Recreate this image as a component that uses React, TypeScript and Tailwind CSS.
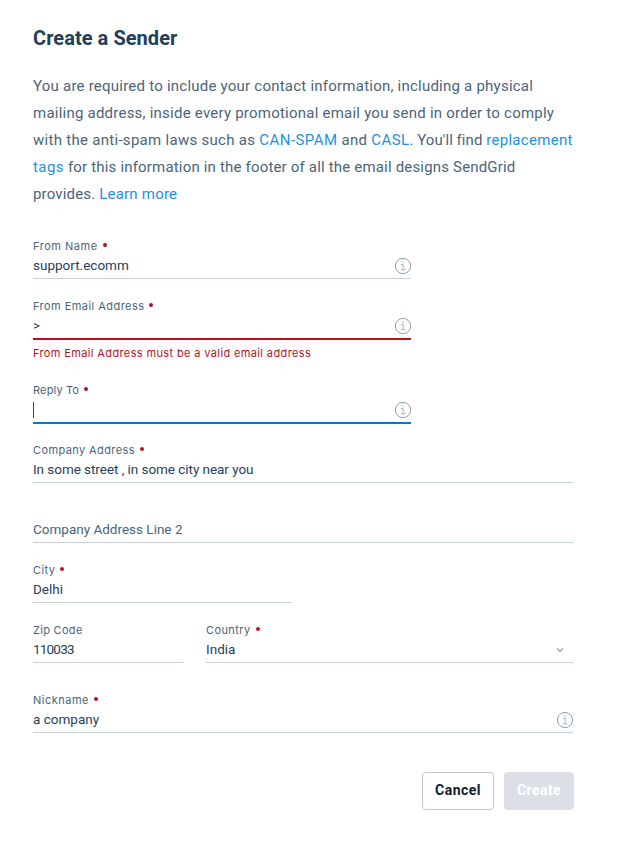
import type { ReactNode } from "react";

function InfoIcon() {
  return (
    <svg width="18" height="18" viewBox="0 0 18 18" fill="none" stroke="#8d9eae" className="-mr-px shrink-0">
      <circle cx="9" cy="9" r="7.6" strokeWidth="1" />
      <path d="M7.2 7.5h2v5M6.8 12.8h4.6" strokeWidth="0.8" />
      <path d="M8.4 5.1h1.1" strokeWidth="1.1" />
    </svg>
  );
}

type FieldProps = {
  label?: string;
  labelClass?: string;
  required?: boolean;
  width: string;
  line?: string;
  icon?: ReactNode;
  valueClass?: string;
  children?: ReactNode;
};

function Field({
  label,
  labelClass = "tracking-[0.4px]",
  required,
  width,
  line = "border-b border-[#c7d0d8]",
  icon,
  valueClass = "",
  children,
}: FieldProps) {
  return (
    <div className={width}>
      <div className="flex h-4 items-center font-['Inter',sans-serif] text-[11px] leading-4 text-[#4b647a]">
        {label && <span className={labelClass}>{label}</span>}
        {required && <span className="mb-[2px] ml-[5px] size-1 rounded-full bg-[#b5121f]" />}
      </div>
      <div className={`box-content flex h-6 items-center justify-between text-[13.5px] text-[#23425b] ${line}`}>
        <div className={`flex h-6 items-center leading-[22px] ${valueClass || "pb-[2px]"}`}>{children}</div>
        {icon}
      </div>
    </div>
  );
}

export default function App() {
  return (
    <main className="h-[855px] w-[627px] bg-white pl-[33px] font-['Roboto',sans-serif] text-[#23425b]">
      <h1 className="pt-[25px] text-[20px] font-bold leading-[27px] tracking-[0.05px] text-[#1f4058]">Create a Sender</h1>
      <p className="mt-[21px] whitespace-nowrap text-[15px] leading-[27px] text-[#4b647a]">
        <span className="block tracking-[0.23px]">You are required to include your contact information, including a physical</span>
        <span className="block tracking-[0.23px]">mailing address, inside every promotional email you send in order to comply</span>
        <span className="block tracking-[0.29px]">
          with the anti-spam laws such as <a className="tracking-[0.45px] text-[#2490e3]">CAN-SPAM</a> and{" "}
          <a className="tracking-[0.4px] text-[#2490e3]">CASL</a>
          <span className="tracking-[0.05px]">. You'll find </span>
          <a className="tracking-[0.3px] text-[#2490e3]">replacement</a>
        </span>
        <span className="block tracking-[0.18px]">
          <a className="tracking-[0.45px] text-[#2490e3]">tags</a> for this information in the footer of all the email designs SendGrid
        </span>
        <span className="block tracking-[0.16px]">
          provides. <a className="tracking-[0.22px] text-[#2490e3]">Learn more</a>
        </span>
      </p>

      <form className="mt-[30px] flex flex-col">
        <Field label="From Name" labelClass="tracking-[0.52px]" required width="w-[378px]" icon={<InfoIcon />}>support.ecomm</Field>
        <div className="mt-[19px]">
          <Field label="From Email Address" labelClass="tracking-[0.45px]" required width="w-[378px]" line="border-b-2 border-[#b5121f]" icon={<InfoIcon />}>&gt;</Field>
          <div className="h-[42px] pt-[5px] font-['Inter',sans-serif] text-[11px] leading-4 tracking-[0.37px] text-[#b5121f]">
            From Email Address must be a valid email address
          </div>
        </div>
        <Field label="Reply To" labelClass="tracking-[0.15px]" required width="w-[378px]" valueClass="pb-0" line="border-b-2 border-[#0277d9]" icon={<InfoIcon />}>
          <span className="h-4 w-px bg-[#294661]" />
        </Field>
        <div className="mt-[18px]">
          <Field label="Company Address" required width="w-[540px]" valueClass="pb-[2px] tracking-[-0.05px]">In some street , in some city near you</Field>
        </div>
        <div className="mt-[19px]">
          <Field width="w-[540px]"><span className="text-[#4b647a]">Company Address Line 2</span></Field>
        </div>
        <div className="mt-[19px]">
          <Field label="City" required width="w-[259px]">Delhi</Field>
        </div>
        <div className="mt-[19px] flex gap-[22px]">
          <Field label="Zip Code" labelClass="tracking-[0.3px]" width="w-[151px]" valueClass="pb-[2px] tracking-[-0.8px]">110033</Field>
          <Field
            label="Country"
            required
            width="w-[367px]"
            icon={
              <svg width="8" height="6" viewBox="0 0 8 6" fill="none" stroke="#8293a3" className="mr-[9px]">
                <path d="M1 1.3 4 4.3 7 1.3" strokeWidth="1.2" />
              </svg>
            }
          >
            India
          </Field>
        </div>
        <div className="mt-[29px]">
          <Field label="Nickname" labelClass="tracking-[0.5px]" required width="w-[540px]" icon={<InfoIcon />}>a company</Field>
        </div>
        <div className="mt-[39px] flex w-[541px] justify-end gap-[10px] text-[14px] font-bold tracking-[0.45px]">
          <button type="button" className="h-[38px] w-[72px] rounded-[4px] border border-[#c3c5d7] pb-[2px] text-[#121c2d]">Cancel</button>
          <button type="button" className="h-[38px] w-[70px] rounded-[4px] bg-[#dcdfe6] pb-[2px] text-white">Create</button>
        </div>
      </form>
    </main>
  );
}
